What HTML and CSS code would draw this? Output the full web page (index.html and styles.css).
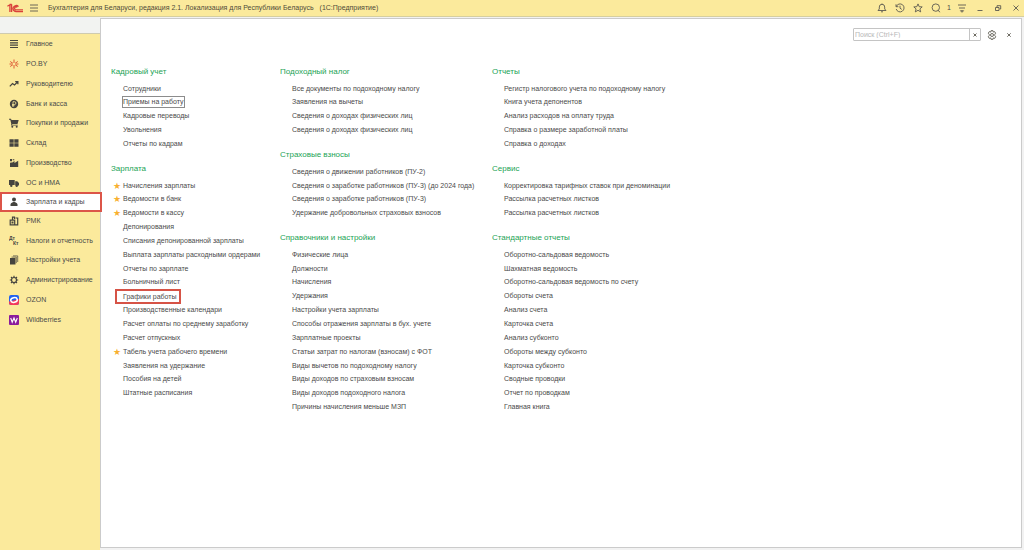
FILE: index.html
```html
<!DOCTYPE html>
<html lang="ru">
<head>
<meta charset="utf-8">
<title>Бухгалтерия для Беларуси</title>
<link rel="stylesheet" href="styles.css">
</head>
<body>
<header class="titlebar">
  <svg class="logo" viewBox="0 0 16 10" fill="none" stroke="#d9403a" stroke-width="1.3"><path d="M.4 3.300 2.900 1.800v7.200M4.600 1.300v7.700M2.700 1.500h2M11.500 3.600A3.100 3.100 0 1 0 9 8.700h7M10.200 4.400A1.500 1.500 0 1 0 9.200 6.900H16"/></svg>
  <button class="icon-btn menu" aria-label="Меню"><svg viewBox="0 0 10 10"><path d="M1 2h8M1 5h8M1 8h8"/></svg></button>
  <h1 class="app-title">Бухгалтерия для Беларуси, редакция 2.1. Локализация для Республики Беларусь <span class="platform">(1С:Предприятие)</span></h1>
  <div class="tools">
    <button class="icon-btn" aria-label="Уведомления"><svg viewBox="0 0 10 10"><path d="M1 7.500h8L7.700 6V4a2.700 2.700 0 0 0-5.400 0v2zM4 8.800h2M5 1.300V.5"/></svg></button>
    <button class="icon-btn" aria-label="История"><svg viewBox="0 0 10 10"><path d="M1.300 3.500A4 4 0 1 1 1.200 6M1 1.300v2.400h2.400M5 2.700V5.200l1.800 1.200"/></svg></button>
    <button class="icon-btn" aria-label="Избранное"><svg viewBox="0 0 10 10"><path d="m5 .9 1.200 2.800 3 .2L6.900 5.900l.8 3L5 7.300 2.300 8.900l.8-3L.8 3.900l3-.2z"/></svg></button>
    <button class="icon-btn" aria-label="Поиск"><svg viewBox="0 0 10 10"><circle cx="4.800" cy="4.600" r="3.700"/><path d="m6.800 7.200 2.300 2"/></svg></button>
    <span class="count">1</span>
    <button class="icon-btn" aria-label="Настройка панели"><svg viewBox="0 0 10 10"><path d="M1 2h8M2 5h6M3.500 7.700h3L5 9.300z"/></svg></button>
    <button class="icon-btn" aria-label="Свернуть"><svg viewBox="0 0 10 10"><path d="M2.500 7.500h5"/></svg></button>
    <button class="icon-btn" aria-label="Развернуть"><svg viewBox="0 0 10 10"><path d="M2.500 4.500h3.500v3h-3.500zM4 4V2.700h3.700V6H6.500"/></svg></button>
    <button class="icon-btn" aria-label="Закрыть"><svg viewBox="0 0 10 10"><path d="m2.500 2.500 5 5m0-5-5 5"/></svg></button>
  </div>
</header>
<div class="workspace">
  <nav class="sidebar">
    <ul class="sections">
      <li><a href="#"><svg viewBox="0 0 10 10"><path class="line" d="M1 1.500h8M1 3.800h8M1 6.200h8M1 8.500h8"/></svg>Главное</a></li>
      <li><a href="#"><svg viewBox="0 0 10 10"><path class="line red" d="M5 .5V4M5 6v3.500M1.200 2.500 4 4.400M6 5.600l2.800 1.900M8.800 2.500 6 4.400M4 5.600 1.200 7.500M.5 5H3M7 5h2.500"/></svg>PO.BY</a></li>
      <li><a href="#"><svg viewBox="0 0 10 10"><path class="line" d="m.8 7.300 2.700-2.800L5.500 6l3-3M6.200 2.700h2.700v2.500"/></svg>Руководителю</a></li>
      <li><a href="#"><svg viewBox="0 0 10 10"><circle cx="5" cy="5" r="4.200"/><path class="cut" d="M4 8V2.700h1.500a1.400 1.400 0 0 1 0 2.800H3M3 6.700h2.500"/></svg>Банк и касса</a></li>
      <li><a href="#"><svg viewBox="0 0 10 10"><path d="M0 .8h2l.5 1.200H9.700L8.500 6H3.300l-.2.800h5.700v.8H2L2.300 6 1.300 1.700H0z"/><circle cx="3.300" cy="8.700" r="1"/><circle cx="7.700" cy="8.700" r="1"/></svg>Покупки и продажи</a></li>
      <li><a href="#"><svg viewBox="0 0 10 10"><path d="M.5 1.200h4.200v3.500H.5zM5.300 1.200h4.200v3.500H5.300zM.5 5.300h4.200v3.500H.5zM5.300 5.300h4.200v3.500H5.300z"/></svg>Склад</a></li>
      <li><a href="#"><svg viewBox="0 0 10 10"><path d="M1 9V5l1.500-1V5l3-2v2l3.700-2.200V9zM1 1h2v2.200H1zM3.700 1.200h1.600v1H3.700z"/></svg>Производство</a></li>
      <li><a href="#"><svg viewBox="0 0 10 10"><path d="M0 2h5.700v5H0zM6.200 3.300h2L10 5v2.500H6.200z"/><circle cx="2.300" cy="7.700" r="1.200"/><circle cx="7.700" cy="7.700" r="1.200"/></svg>ОС и НМА</a></li>
      <li class="current"><a href="#" aria-current="page"><svg viewBox="0 0 10 10"><circle cx="5" cy="2.600" r="2"/><path d="M1.500 9V7.200C2 5.800 3.800 5.700 3.800 5h2.400c0 .7 1.800.8 2.300 2.200V9z"/></svg>Зарплата и кадры</a></li>
      <li><a href="#"><svg viewBox="0 0 10 10"><path class="line" d="M1.200 4.200h4.500v4.700H1.200zM3.500 3.700V1.200h2V3M5.700 8.900h3V2H6.500"/><path d="M2.500 5.500h2v2h-2z"/></svg>РМК</a></li>
      <li><a href="#"><svg class="letters" viewBox="0 0 10 10"><text x="0" y="4">Дт</text><text x="4" y="9">Кт</text></svg>Налоги и отчетность</a></li>
      <li><a href="#"><svg viewBox="0 0 10 10"><path d="M1 3h5.500v6.500H1z"/><path class="line thin" d="M2.500 2.100h4.800v6M4 .9h4.700V7"/></svg>Настройки учета</a></li>
      <li><a href="#"><svg viewBox="0 0 10 10"><circle class="line" cx="5" cy="5" r="2.500"/><path class="line" d="M5 .8v1.700M5 7.500v1.700M.8 5h1.700M7.500 5h1.700M2 2l1.200 1.200M6.800 6.800 8 8M8 2 6.800 3.200M3.200 6.800 2 8"/></svg>Администрирование</a></li>
      <li><a href="#"><svg viewBox="0 0 10 10"><rect width="10" height="10" rx="2" fill="#2462ee"/><path fill="#f43a5b" d="M0 6.500 10 4v4a2 2 0 0 1-2 2H2a2 2 0 0 1-2-2z"/><ellipse cx="5" cy="5" rx="3.300" ry="2.300" fill="none" stroke="#fff" stroke-width="1.500" transform="rotate(-12 5 5)"/></svg>OZON</a></li>
      <li><a href="#"><svg viewBox="0 0 10 10"><rect width="10" height="10" rx="1" fill="#8a1c9c"/><path d="m1.700 3 1.500 4.200L5 3l1.700 4.200L8.300 3" fill="none" stroke="#fff" stroke-width="1.100"/></svg>Wildberries</a></li>
    </ul>
  </nav>
  <main class="panel">
    <form class="panel-tools">
      <div class="search">
        <input type="text" aria-label="Поиск" placeholder="Поиск (Ctrl+F)">
        <button type="button" class="clear" aria-label="Очистить"><svg viewBox="0 0 10 10"><path d="m3.500 3.500 3 3m0-3-3 3"/></svg></button>
      </div>
      <button type="button" class="icon-btn gear" aria-label="Настройки"><svg viewBox="0 0 10 10"><path d="M4 .7h2l.3 1.400 1.300-.5 1 1.600L7.800 4.300v1.400l.9 1-1 1.700-1.400-.5L6 9.300H4l-.3-1.400-1.400.5-1-1.700.9-1V4.300l-.9-1.100 1-1.600 1.400.5z"/><circle cx="5" cy="5" r="1.500"/></svg></button>
      <button type="button" class="icon-btn close" aria-label="Закрыть панель"><svg viewBox="0 0 10 10"><path d="m3.300 3.300 3.400 3.400m0-3.400-3.400 3.400"/></svg></button>
    </form>
    <div class="columns">
      <div class="column">
        <h2>Кадровый учет</h2>
        <ul>
          <li><a href="#">Сотрудники</a></li>
          <li><a href="#" class="focused">Приемы на работу</a></li>
          <li><a href="#">Кадровые переводы</a></li>
          <li><a href="#">Увольнения</a></li>
          <li><a href="#">Отчеты по кадрам</a></li>
        </ul>
        <h2>Зарплата</h2>
        <ul>
          <li class="starred"><a href="#">Начисления зарплаты</a></li>
          <li class="starred"><a href="#">Ведомости в банк</a></li>
          <li class="starred"><a href="#">Ведомости в кассу</a></li>
          <li><a href="#">Депонирования</a></li>
          <li><a href="#">Списания депонированной зарплаты</a></li>
          <li><a href="#">Выплата зарплаты расходными ордерами</a></li>
          <li><a href="#">Отчеты по зарплате</a></li>
          <li><a href="#">Больничный лист</a></li>
          <li><a href="#" class="marked">Графики работы</a></li>
          <li><a href="#">Производственные календари</a></li>
          <li><a href="#">Расчет оплаты по среднему заработку</a></li>
          <li><a href="#">Расчет отпускных</a></li>
          <li class="starred"><a href="#">Табель учета рабочего времени</a></li>
          <li><a href="#">Заявления на удержание</a></li>
          <li><a href="#">Пособия на детей</a></li>
          <li><a href="#">Штатные расписания</a></li>
        </ul>
      </div>
      <div class="column">
        <h2>Подоходный налог</h2>
        <ul>
          <li><a href="#">Все документы по подоходному налогу</a></li>
          <li><a href="#">Заявления на вычеты</a></li>
          <li><a href="#">Сведения о доходах физических лиц</a></li>
          <li><a href="#">Сведения о доходах физических лиц</a></li>
        </ul>
        <h2>Страховые взносы</h2>
        <ul>
          <li><a href="#">Сведения о движении работников (ПУ-2)</a></li>
          <li><a href="#">Сведения о заработке работников (ПУ-3) (до 2024 года)</a></li>
          <li><a href="#">Сведения о заработке работников (ПУ-3)</a></li>
          <li><a href="#">Удержание добровольных страховых взносов</a></li>
        </ul>
        <h2>Справочники и настройки</h2>
        <ul>
          <li><a href="#">Физические лица</a></li>
          <li><a href="#">Должности</a></li>
          <li><a href="#">Начисления</a></li>
          <li><a href="#">Удержания</a></li>
          <li><a href="#">Настройки учета зарплаты</a></li>
          <li><a href="#">Способы отражения зарплаты в бух. учете</a></li>
          <li><a href="#">Зарплатные проекты</a></li>
          <li><a href="#">Статьи затрат по налогам (взносам) с ФОТ</a></li>
          <li><a href="#">Виды вычетов по подоходному налогу</a></li>
          <li><a href="#">Виды доходов по страховым взносам</a></li>
          <li><a href="#">Виды доходов подоходного налога</a></li>
          <li><a href="#">Причины начисления меньше МЗП</a></li>
        </ul>
      </div>
      <div class="column">
        <h2>Отчеты</h2>
        <ul>
          <li><a href="#">Регистр налогового учета по подоходному налогу</a></li>
          <li><a href="#">Книга учета депонентов</a></li>
          <li><a href="#">Анализ расходов на оплату труда</a></li>
          <li><a href="#">Справка о размере заработной платы</a></li>
          <li><a href="#">Справка о доходах</a></li>
        </ul>
        <h2>Сервис</h2>
        <ul>
          <li><a href="#">Корректировка тарифных ставок при деноминации</a></li>
          <li><a href="#">Рассылка расчетных листков</a></li>
          <li><a href="#">Рассылка расчетных листков</a></li>
        </ul>
        <h2>Стандартные отчеты</h2>
        <ul>
          <li><a href="#">Оборотно-сальдовая ведомость</a></li>
          <li><a href="#">Шахматная ведомость</a></li>
          <li><a href="#">Оборотно-сальдовая ведомость по счету</a></li>
          <li><a href="#">Обороты счета</a></li>
          <li><a href="#">Анализ счета</a></li>
          <li><a href="#">Карточка счета</a></li>
          <li><a href="#">Анализ субконто</a></li>
          <li><a href="#">Обороты между субконто</a></li>
          <li><a href="#">Карточка субконто</a></li>
          <li><a href="#">Сводные проводки</a></li>
          <li><a href="#">Отчет по проводкам</a></li>
          <li><a href="#">Главная книга</a></li>
        </ul>
      </div>
    </div>
  </main>
</div>
</body>
</html>
```
FILE: styles.css
```css
* { box-sizing: border-box; }
body {
  margin: 0;
  min-height: 100vh;
  display: flex;
  flex-direction: column;
  font: 7px/12px "Liberation Sans", Arial, sans-serif;
  color: #4a4a4a;
  background: #f2f2f2;
}
ul, h1, h2 { margin: 0; padding: 0; font-weight: normal; list-style: none; }
a { color: inherit; text-decoration: none; }
button { padding: 0; border: 0; background: none; color: inherit; font: inherit; }
svg { display: block; width: 10px; height: 10px; flex: none; }

.titlebar {
  display: flex;
  align-items: center;
  height: 17px;
  padding: 0 3px 0 7px;
  background: #fbea9c;
  border-bottom: 1px solid #d6cf9f;
}
.logo { width: 16px; }
.icon-btn svg, .clear svg { fill: none; stroke: #5c5a50; stroke-width: 0.9; }
.menu { margin: 0 9px 0 6px; }
.app-title { flex: 1; font-size: 7px; color: #4f4b3a; white-space: nowrap; }
.platform { margin-left: 4px; }
.tools { display: flex; align-items: center; gap: 8px; }
.count { margin: 0 -2px; }

.workspace { flex: 1; display: flex; }
.sidebar { width: 100px; padding-top: 17px; background: linear-gradient(#f2f3f1 16px, #cfcbb0 16px, #cfcbb0 17px, #fbea9c 17px); }
.sections { display: flex; flex-direction: column; height: 296px; }
.sections li { flex: 1; display: flex; }
.sections a { flex: 1; display: flex; align-items: center; gap: 7px; padding-left: 9px; white-space: nowrap; }
.sections svg { fill: #45443f; }
.sections .line { fill: none; stroke: #45443f; stroke-width: 1.2; }
.sections .thin { stroke-width: 0.7; }
.sections .red { stroke: #dd5a35; stroke-width: 1; }
.sections .cut { fill: none; stroke: #fbea9c; stroke-width: 0.8; }
.letters { font-size: 5px; font-weight: bold; }
.sections .current { position: relative; z-index: 1; margin: -1px -2px -1px 0; background: #fff; outline: 2px solid #dc5548; outline-offset: -2px; }

.panel {
  flex: 1;
  margin: 1px 2px 2px 0;
  padding-top: 9px;
  background: #fff;
  border: 1px solid #cbcbcb;
}
.panel-tools { display: flex; align-items: center; justify-content: flex-end; padding-right: 7px; }
.search { display: flex; width: 128px; height: 13px; border: 1px solid #c4c4c4; border-radius: 1px; }
.search input { flex: 1; min-width: 0; padding: 0 1px; border: 0; outline: 0; background: none; font: inherit; }
.search input::placeholder { color: #b8b8b8; opacity: 1; }
.clear { display: flex; align-items: center; border-left: 1px solid #c4c4c4; }
.gear { margin: 0 7px 0 6px; }

.columns { display: flex; margin-top: 13px; padding-left: 10px; }
.column { display: grid; grid-template-rows: repeat(26, 1fr); height: 360px; white-space: nowrap; }
.column:nth-child(1) { width: 169px; }
.column:nth-child(2) { width: 212px; }
.column ul { display: contents; }
.column h2 { grid-row: span 2; align-self: end; padding-bottom: 2px; font-size: 8px; line-height: 16px; color: #22a355; }
.column li { display: flex; align-items: center; padding-left: 12px; }
.column .starred { padding-left: 2px; }
.starred::before { content: "★"; width: 10px; font: 9px/12px "DejaVu Sans", sans-serif; color: #f8b030; }
.focused { outline: 1px solid #8c8c8c; line-height: 10px; }
.marked { margin: -1px 0 -1px -8px; padding: 0 2px 0 6px; border: 2px solid #d65346; line-height: 11px; }
```
